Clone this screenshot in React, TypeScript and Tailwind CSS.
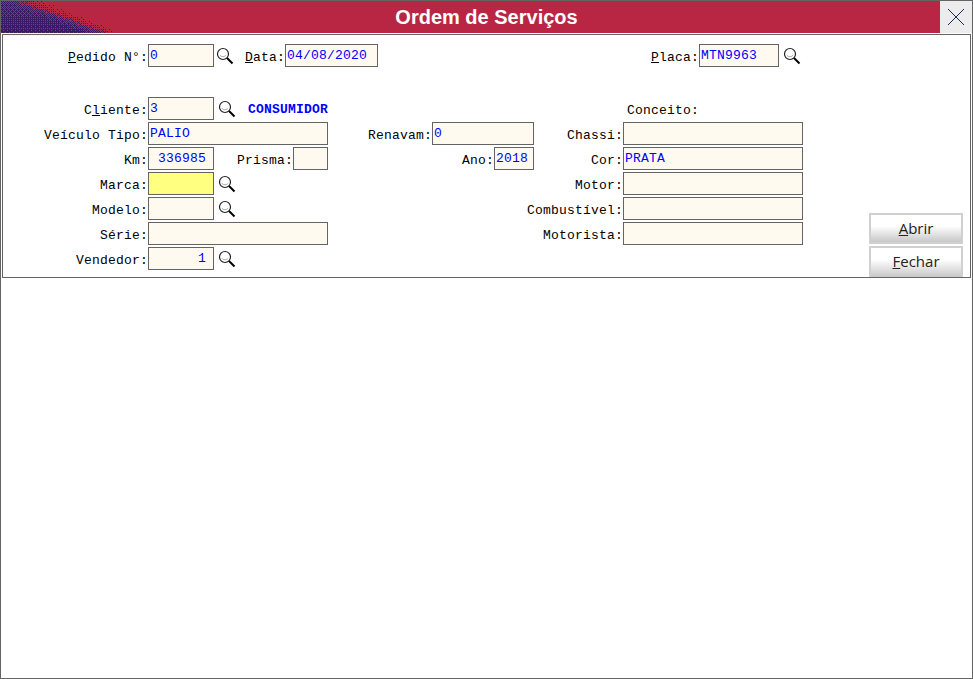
import type { ReactNode } from "react";

const mono = "font-['Liberation_Mono',monospace] text-[13px] leading-none tracking-[0.2px]";

function Lens() {
  return (
    <svg width="18" height="18" viewBox="0 0 18 18" className="shrink-0" aria-hidden>
      <circle cx="7" cy="7" r="5.5" fill="#fff" stroke="#222" strokeWidth="1.2" />
      <path d="M3.800 8.200c1.400 2 4.800 2 6.400 0" fill="none" stroke="#aaa" strokeWidth="1" />
      <path d="M11 11l5.500 5.500" stroke="#000" strokeWidth="2" />
    </svg>
  );
}

function Label({ text, mark, className = "" }: { text: string; mark?: number; className?: string }) {
  return (
    <span className={`${mono} whitespace-pre pt-[3px] text-right text-black ${className}`}>
      {mark === undefined ? (
        text
      ) : (
        <>
          {text.slice(0, mark)}
          <u>{text[mark]}</u>
          {text.slice(mark + 1)}
        </>
      )}
      :
    </span>
  );
}

function Input({
  value = "",
  width,
  right,
  yellow,
}: {
  value?: string;
  width: string;
  right?: boolean;
  yellow?: boolean;
}) {
  return (
    <div
      className={`${mono} ${width} ${yellow ? "bg-[#ffff80]" : "bg-[#fffaf0]"} ${
        right ? "justify-end pr-[7px]" : "pl-[1px]"
      } flex h-[23px] shrink-0 border border-[#646464] pt-[4px] text-[#0000ff]`}
    >
      {value}
    </div>
  );
}

function Row({ children, className = "" }: { children: ReactNode; className?: string }) {
  return <div className={`flex h-[23px] items-center ${className}`}>{children}</div>;
}

function LeftLabel({ text, mark }: { text: string; mark?: number }) {
  return <Label text={text} mark={mark} className="w-[145px] shrink-0" />;
}

const bayer = [
  [0, 8, 2, 10],
  [12, 4, 14, 6],
  [3, 11, 1, 9],
  [15, 7, 13, 5],
];

// dithered wave in the corner of the title bar
function ditherPath(density: (x: number, y: number) => number) {
  let d = "";
  for (let y = 0; y < 32; y++) {
    for (let x = 0; x < 130; x++) {
      if (density(x, y) > (bayer[y % 4][x % 4] + 0.5) / 16) d += `M${x} ${y}h1v1h-1z`;
    }
  }
  return d;
}

const dark = ditherPath((x, y) => {
  const base = 0.5 + (y / 32) * 0.4;
  const falloff = Math.min(1, Math.max(0, (x - y * 2.4 - 5) / 40));
  return base * (1 - falloff);
});

function Wave() {
  return (
    <svg width="130" height="32" viewBox="0 0 130 32" className="absolute left-0 top-0" aria-hidden>
      <path d={dark} fill="#3a1a64" />
    </svg>
  );
}

export default function App() {
  return (
    <div className="flex h-[679px] w-[973px] flex-col overflow-hidden border-x border-b border-[#646464] bg-white">
      <header className="relative flex h-[33px] shrink-0 border-t border-[#646464] bg-[#b92644]">
        <Wave />
        <h1 className="relative flex-1 pl-[32px] text-center font-['Liberation_Sans',sans-serif] text-[20px] font-bold leading-[33px] text-white">
          Ordem de Serviços
        </h1>
        <button className="flex w-[32px] items-center justify-center bg-[#ececec]" aria-label="Fechar">
          <svg width="18" height="18" viewBox="0 0 18 18" aria-hidden>
            <path d="M1 1l16 16M17 1L1 17" stroke="#1c2a50" strokeWidth="1" />
          </svg>
        </button>
      </header>

      <section className="mx-px mt-px flex h-[244px] overflow-hidden border border-[#646464] bg-white">
        <div className="w-[866px] shrink-0 pt-[9px]">
          <Row>
            <LeftLabel text="Pedido N°" mark={0} />
            <Input value="0" width="w-[66px]" />
            <span className="ml-[2px]"><Lens /></span>
            <Label text="Data" mark={0} className="ml-[11px]" />
            <Input value="04/08/2020" width="w-[93px]" />
            <Label text="Placa" mark={0} className="ml-[273px]" />
            <Input value="MTN9963" width="w-[80px]" />
            <span className="ml-[4px]"><Lens /></span>
          </Row>

          <Row className="mt-[30px]">
            <LeftLabel text="Cliente" mark={1} />
            <Input value="3" width="w-[66px]" />
            <span className="ml-[4px]"><Lens /></span>
            <span className={`${mono} ml-[12px] pt-[2px] font-bold text-[#0000ff]`}>CONSUMIDOR</span>
            <span className={`${mono} ml-[299px] pt-[3px] text-black`}>Conceito:</span>
          </Row>

          <div className="mt-[2px] grid grid-cols-[325px_206px_269px] gap-y-[2px]">
            <Row>
              <LeftLabel text="Veículo Tipo" />
              <Input value="PALIO" width="w-[180px]" />
            </Row>
            <Row className="justify-end">
              <Label text="Renavam" />
              <Input value="0" width="w-[102px]" />
            </Row>
            <Row className="justify-end">
              <Label text="Chassi" />
              <Input width="w-[180px]" />
            </Row>

            <Row>
              <LeftLabel text="Km" />
              <Input value="336985" width="w-[66px]" right />
              <Label text="Prisma" className="ml-[23px]" />
              <Input width="w-[35px]" />
            </Row>
            <Row className="justify-end">
              <Label text="Ano" />
              <Input value="2018" width="w-[40px]" />
            </Row>
            <Row className="justify-end">
              <Label text="Cor" />
              <Input value="PRATA" width="w-[180px]" />
            </Row>

            <Row>
              <LeftLabel text="Marca" />
              <Input width="w-[66px]" yellow />
              <span className="ml-[4px]"><Lens /></span>
            </Row>
            <div />
            <Row className="justify-end">
              <Label text="Motor" />
              <Input width="w-[180px]" />
            </Row>

            <Row>
              <LeftLabel text="Modelo" />
              <Input width="w-[66px]" />
              <span className="ml-[4px]"><Lens /></span>
            </Row>
            <div />
            <Row className="justify-end">
              <Label text="Combustível" />
              <Input width="w-[180px]" />
            </Row>

            <Row>
              <LeftLabel text="Série" />
              <Input width="w-[180px]" />
            </Row>
            <div />
            <Row className="justify-end">
              <Label text="Motorista" />
              <Input width="w-[180px]" />
            </Row>

            <Row>
              <LeftLabel text="Vendedor" />
              <Input value="1" width="w-[66px]" right />
              <span className="ml-[4px]"><Lens /></span>
            </Row>
          </div>
        </div>

        <div className="flex w-[94px] shrink-0 flex-col justify-end gap-[2px] font-['Open_Sans',sans-serif]">
          <button className="h-[31px] shrink-0 border-2 border-[#d0d0d0] bg-gradient-to-b from-white from-40% to-[#c8c8c8] text-[15px] text-[#222]">
            <u>A</u>brir
          </button>
          <button className="h-[31px] shrink-0 border-2 border-b-0 border-[#d0d0d0] bg-gradient-to-b from-white from-40% to-[#c8c8c8] pb-[2px] text-[15px] text-[#222]">
            <u>F</u>echar
          </button>
        </div>
      </section>
    </div>
  );
}
